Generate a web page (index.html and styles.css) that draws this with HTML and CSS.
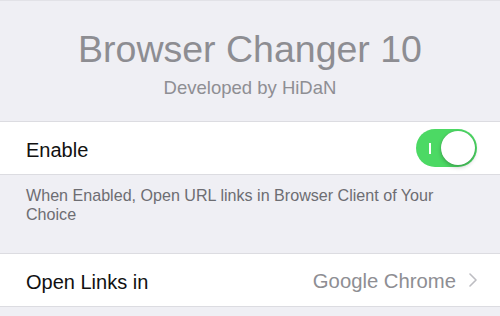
FILE: index.html
```html
<!DOCTYPE html>
<html lang="en">
<head>
    <meta charset="UTF-8">
    <meta name="viewport" content="width=device-width, initial-scale=1.0">
    <title>Browser Changer 10</title>
    <link rel="stylesheet" href="styles.css">
</head>
<body>
    <header class="prefs-header">
        <h1 class="prefs-title">Browser Changer 10</h1>
        <p class="prefs-subtitle">Developed by HiDaN</p>
    </header>

    <section class="group">
        <div class="cell">
            <span class="cell-label">Enable</span>
            <span class="switch">
                <span class="switch-mark"></span>
                <span class="switch-knob"></span>
            </span>
        </div>
    </section>
    <p class="group-footer">When Enabled, Open URL links in Browser Client of Your Choice</p>

    <section class="group">
        <div class="cell">
            <span class="cell-label">Open Links in</span>
            <span class="cell-value">
                Google Chrome
                <svg class="chevron" width="8" height="14" viewBox="0 0 8 14">
                    <path d="M1 1 L7 7 L1 13" fill="none" stroke="#bdbdc2" stroke-width="1.6" stroke-linecap="round" stroke-linejoin="round"/>
                </svg>
            </span>
        </div>
    </section>
</body>
</html>
```

FILE: styles.css
```css
/* Reset */
* {
    margin: 0;
    padding: 0;
    box-sizing: border-box;
}

body {
    font-family: 'Liberation Sans', Arial, sans-serif;
    background-color: #efeff4;
    border-top: 1px solid #e2e2e7;
    color: #000;
}

/* Header */
.prefs-header {
    text-align: center;
    padding-top: 27px;
}

.prefs-title {
    font-size: 37.5px;
    font-weight: normal;
    color: #8d8d92;
    line-height: 42px;
}

.prefs-subtitle {
    font-size: 18.5px;
    color: #8e8e93;
    line-height: 22px;
    margin-top: 7px;
}

/* Groups and cells */
.group {
    background-color: #fff;
    border-top: 1px solid #dcdce1;
    border-bottom: 1px solid #dcdce1;
}

.prefs-header + .group {
    margin-top: 22px;
}

.group-footer + .group {
    margin-top: 29px;
}

.cell {
    height: 52px;
    display: flex;
    align-items: center;
    justify-content: space-between;
    padding: 0 23px 0 26px;
}

.cell-label {
    font-size: 20px;
    color: #111;
    padding-top: 4px;
}

.cell-value {
    display: flex;
    align-items: center;
    gap: 13px;
    font-size: 20.3px;
    color: #8e8e93;
    padding-top: 2px;
}

.chevron {
    display: block;
    margin-top: -2px;
}

.group-footer {
    font-size: 16.1px;
    line-height: 19px;
    color: #6d6d72;
    padding: 11px 26px 0 26px;
}

/* Switch */
.switch {
    position: relative;
    display: block;
    width: 61px;
    height: 38px;
    border-radius: 19px;
    background-color: #4cd964;
}

.switch-mark {
    position: absolute;
    left: 13px;
    top: 14px;
    width: 1.5px;
    height: 11px;
    background-color: #fff;
}

.switch-knob {
    position: absolute;
    right: 2px;
    top: 2px;
    width: 34px;
    height: 34px;
    border-radius: 50%;
    background-color: #fff;
    box-shadow: 0 2px 4px rgba(0, 0, 0, 0.25), 0 0 1px rgba(0, 0, 0, 0.2);
}
```
